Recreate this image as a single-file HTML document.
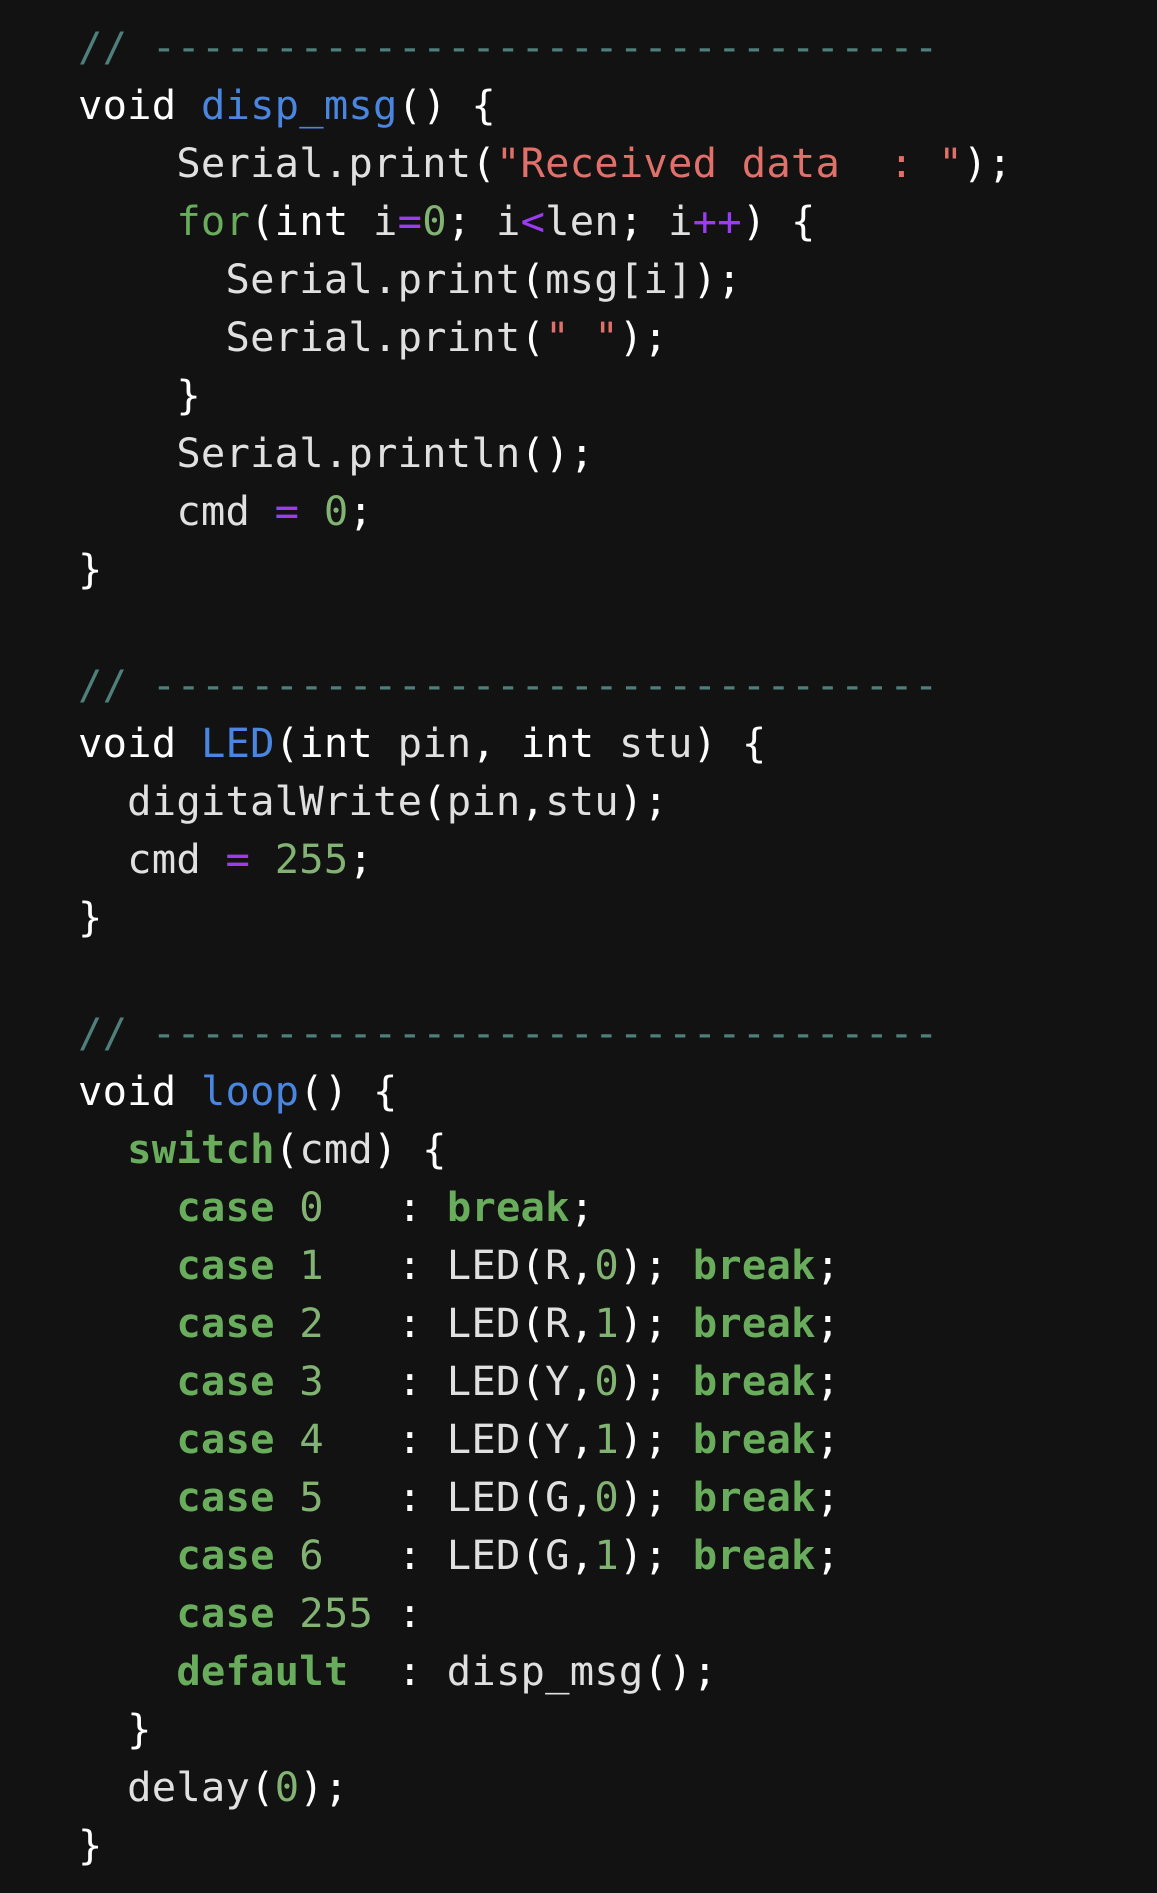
<!DOCTYPE html>
<html><head><meta charset="utf-8"><style>
html,body{margin:0;padding:0;background:#121212;width:1157px;height:1893px;overflow:hidden}
pre{margin:0;position:absolute;left:78px;top:18px;font-family:"DejaVu Sans Mono","Liberation Mono",monospace;font-size:40.5px;line-height:58px;color:#e0e0e0;letter-spacing:0.2px}
.c{color:#4f7f7b}.f{color:#4a86e0}.s{color:#e2706a}.k{color:#68ac5c;font-weight:bold}.n{color:#82b372}.o{color:#9b3cf2}.w{color:#fff}
</style></head><body><pre><span class="c">// --------------------------------</span>
<span class="w">void</span> <span class="f">disp_msg</span><span class="w">() {</span>
    Serial.print<span class="w">(</span><span class="s">"Received data  : "</span><span class="w">);</span>
    <span class="k" style="font-weight:normal">for</span><span class="w">(int</span> i<span class="o">=</span><span class="n">0</span><span class="w">;</span> i<span class="o">&lt;</span>len<span class="w">;</span> i<span class="o">++</span><span class="w">) {</span>
      Serial.print<span class="w">(</span>msg[i]<span class="w">);</span>
      Serial.print<span class="w">(</span><span class="s">" "</span><span class="w">);</span>
    <span class="w">}</span>
    Serial.println<span class="w">();</span>
    cmd <span class="o">=</span> <span class="n">0</span><span class="w">;</span>
<span class="w">}</span>

<span class="c">// --------------------------------</span>
<span class="w">void</span> <span class="f">LED</span><span class="w">(int</span> pin<span class="w">,</span> <span class="w">int</span> stu<span class="w">) {</span>
  digitalWrite<span class="w">(</span>pin<span class="w">,</span>stu<span class="w">);</span>
  cmd <span class="o">=</span> <span class="n">255</span><span class="w">;</span>
<span class="w">}</span>

<span class="c">// --------------------------------</span>
<span class="w">void</span> <span class="f">loop</span><span class="w">() {</span>
  <span class="k">switch</span><span class="w">(</span>cmd<span class="w">) {</span>
    <span class="k">case</span> <span class="n">0</span>   <span class="w">:</span> <span class="k">break</span><span class="w">;</span>
    <span class="k">case</span> <span class="n">1</span>   <span class="w">:</span> LED<span class="w">(</span>R<span class="w">,</span><span class="n">0</span><span class="w">);</span> <span class="k">break</span><span class="w">;</span>
    <span class="k">case</span> <span class="n">2</span>   <span class="w">:</span> LED<span class="w">(</span>R<span class="w">,</span><span class="n">1</span><span class="w">);</span> <span class="k">break</span><span class="w">;</span>
    <span class="k">case</span> <span class="n">3</span>   <span class="w">:</span> LED<span class="w">(</span>Y<span class="w">,</span><span class="n">0</span><span class="w">);</span> <span class="k">break</span><span class="w">;</span>
    <span class="k">case</span> <span class="n">4</span>   <span class="w">:</span> LED<span class="w">(</span>Y<span class="w">,</span><span class="n">1</span><span class="w">);</span> <span class="k">break</span><span class="w">;</span>
    <span class="k">case</span> <span class="n">5</span>   <span class="w">:</span> LED<span class="w">(</span>G<span class="w">,</span><span class="n">0</span><span class="w">);</span> <span class="k">break</span><span class="w">;</span>
    <span class="k">case</span> <span class="n">6</span>   <span class="w">:</span> LED<span class="w">(</span>G<span class="w">,</span><span class="n">1</span><span class="w">);</span> <span class="k">break</span><span class="w">;</span>
    <span class="k">case</span> <span class="n">255</span> <span class="w">:</span>
    <span class="k">default</span>  <span class="w">:</span> disp_msg<span class="w">();</span>
  <span class="w">}</span>
  delay<span class="w">(</span><span class="n">0</span><span class="w">);</span>
<span class="w">}</span></pre></body></html>
